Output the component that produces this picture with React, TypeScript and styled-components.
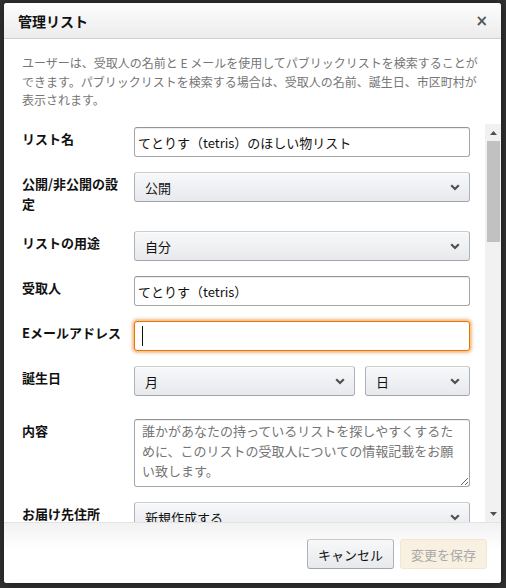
import React from 'react';
import styled, { createGlobalStyle, css } from 'styled-components';

const GlobalStyle = createGlobalStyle`
  html, body {
    margin: 0;
    padding: 0;
  }
  body {
    background: #323232;
    font-family: "Noto Sans CJK JP", "Noto Sans", sans-serif;
    color: #111;
  }
`;

const Backdrop = styled.div`
  width: 506px;
  height: 588px;
  box-sizing: border-box;
  padding: 3px 5px 5px 4px;
  background: #323232;
`;

const Modal = styled.div`
  display: flex;
  flex-direction: column;
  height: 100%;
  background: #fff;
  border-radius: 3px;
  overflow: hidden;
  box-shadow: 0 0 12px rgba(0, 0, 0, 0.5);
`;

const Header = styled.div`
  flex: none;
  height: 36px;
  box-sizing: border-box;
  display: flex;
  align-items: center;
  justify-content: space-between;
  padding: 0 13px 0 14px;
  background: linear-gradient(#fdfdfd, #ececec);
  border-bottom: 1px solid #cfcfcf;
`;

const Title = styled.h4`
  margin: 0;
  font-size: 14px;
  font-weight: 700;
  line-height: 20px;
`;

const Close = styled.button`
  border: 0;
  padding: 0;
  background: none;
  color: #555;
  font-family: "DejaVu Sans", sans-serif;
  font-size: 15px;
  font-weight: 700;
  line-height: 20px;
  cursor: pointer;
`;

const Intro = styled.p`
  flex: none;
  margin: 0;
  height: 85px;
  box-sizing: border-box;
  padding: 15px 8px 0 18px;
  font-size: 12px;
  line-height: 18.5px;
  color: #767676;
  white-space: nowrap;
`;

/* scrolling body: form on the left, a classic scroll rail on the right */
const Body = styled.div`
  flex: 1;
  min-height: 0;
  display: flex;
`;

const ScrollArea = styled.div`
  flex: 1;
  min-width: 0;
  overflow: hidden;
`;

const Rail = styled.div`
  flex: none;
  width: 16px;
  display: flex;
  flex-direction: column;
  background: #f1f1f1;
`;

const RailButton = styled.div`
  flex: none;
  height: 17px;
  display: flex;
  align-items: center;
  justify-content: center;
`;

const Thumb = styled.div`
  flex: none;
  height: 101px;
  margin: 0 1px 0 2px;
  background: #c1c1c1;
`;

const Track = styled.div`
  flex: 1;
`;

const Form = styled.form`
  padding: 3px 15px 0 18px;
`;

const Row = styled.div`
  display: grid;
  grid-template-columns: 112px 1fr;
  margin-bottom: 15px;
`;

const Label = styled.label`
  padding: 2px 4px 2px 0;
  font-size: 13px;
  font-weight: 700;
  line-height: 20px;
`;

const fieldBorder = css`
  box-sizing: border-box;
  width: 100%;
  border: 1px solid #a6a6a6;
  border-top-color: #949494;
  border-radius: 3px;
  font-family: inherit;
  font-size: 13px;
  color: #111;
  outline: none;
`;

const TextInput = styled.input<{ $focused?: boolean }>`
  ${fieldBorder};
  height: 30px;
  padding: 0 3px;
  box-shadow: inset 0 1px 0 rgba(0, 0, 0, 0.07);
  ${(p) =>
    p.$focused &&
    css`
      border-color: #e77600;
      box-shadow: 0 0 3px 2px rgba(228, 121, 17, 0.5);
    `}
`;

const FocusWrap = styled.div`
  position: relative;
`;

const Caret = styled.span`
  position: absolute;
  left: 8px;
  top: 5px;
  width: 1px;
  height: 20px;
  background: #111;
`;

const TextArea = styled.textarea`
  ${fieldBorder};
  display: block;
  height: 68px;
  padding: 1px 7px;
  line-height: 20px;
  resize: vertical;
  box-shadow: inset 0 1px 0 rgba(0, 0, 0, 0.07);

  &::placeholder {
    color: #757575;
  }
`;

const SelectWrap = styled.div`
  position: relative;
`;

const Select = styled.select`
  box-sizing: border-box;
  width: 100%;
  height: 30px;
  padding: 0 30px 0 10px;
  appearance: none;
  border: 1px solid #adb1b8;
  border-color: #cdcdcd #adb1b8 #a2a6ac;
  border-radius: 3px;
  background: linear-gradient(#f7f8fa, #e7e9ec);
  box-shadow: inset 0 1px 0 rgba(255, 255, 255, 0.6);
  font-family: inherit;
  font-size: 13px;
  color: #111;
  outline: none;
`;

const Chevron = styled.svg`
  position: absolute;
  right: 10px;
  top: 12px;
  pointer-events: none;
`;

const DateGroup = styled.div`
  display: grid;
  grid-template-columns: 1fr 105px;
  gap: 10px;
  padding-bottom: 8px;
`;

const Footer = styled.div`
  flex: none;
  height: 61px;
  box-sizing: border-box;
  display: flex;
  align-items: center;
  justify-content: flex-end;
  gap: 6px;
  padding: 2px 14px 0 0;
  border-top: 1px solid #e3e3e3;
  background: linear-gradient(#f2f2f2, #fff 45%);
`;

const Button = styled.button<{ $primary?: boolean }>`
  width: 87px;
  height: 30px;
  border-radius: 3px;
  font-family: inherit;
  font-size: 13px;
  border: 1px solid #adb1b8;
  border-color: #c9cbcf #adb1b8 #a2a6ac;
  background: linear-gradient(#f7f8fa, #e7e9ec);
  color: #111;
  ${(p) =>
    p.$primary &&
    css`
      border-color: #f1e6cf;
      background: #f8f0e0;
      color: #a9a9a9;
    `}
`;

const Dropdown: React.FC<{ value: string }> = ({ value }) => (
  <SelectWrap>
    <Select defaultValue={value}>
      <option>{value}</option>
    </Select>
    <Chevron width="10" height="7" viewBox="0 0 10 7">
      <path d="M1.2 1.2L5 5l3.8-3.8" fill="none" stroke="#505050" strokeWidth="2.2" />
    </Chevron>
  </SelectWrap>
);

const Arrow: React.FC<{ down?: boolean }> = ({ down }) => (
  <svg width="7" height="4" viewBox="0 0 7 4">
    <path d={down ? 'M0 0h7L3.5 4z' : 'M0 4h7L3.5 0z'} fill="#505050" />
  </svg>
);

export default function App() {
  return (
    <>
      <GlobalStyle />
      <Backdrop>
        <Modal>
          <Header>
            <Title>管理リスト</Title>
            <Close type="button">×</Close>
          </Header>

          <Intro>
            ユーザーは、受取人の名前と E メールを使用してパブリックリストを検索することが
            <br />
            できます。パブリックリストを検索する場合は、受取人の名前、誕生日、市区町村が
            <br />
            表示されます。
          </Intro>

          <Body>
            <ScrollArea>
              <Form>
                <Row>
                  <Label>リスト名</Label>
                  <TextInput defaultValue="てとりす（tetris）のほしい物リスト" />
                </Row>

                <Row>
                  <Label>公開/非公開の設定</Label>
                  <Dropdown value="公開" />
                </Row>

                <Row>
                  <Label>リストの用途</Label>
                  <Dropdown value="自分" />
                </Row>

                <Row>
                  <Label>受取人</Label>
                  <TextInput defaultValue="てとりす（tetris）" />
                </Row>

                <Row>
                  <Label>Eメールアドレス</Label>
                  <FocusWrap>
                    <TextInput $focused type="email" />
                    <Caret />
                  </FocusWrap>
                </Row>

                <Row>
                  <Label>誕生日</Label>
                  <DateGroup>
                    <Dropdown value="月" />
                    <Dropdown value="日" />
                  </DateGroup>
                </Row>

                <Row>
                  <Label>内容</Label>
                  <TextArea placeholder="誰かがあなたの持っているリストを探しやすくするために、このリストの受取人についての情報記載をお願い致します。" />
                </Row>

                <Row>
                  <Label>お届け先住所</Label>
                  <Dropdown value="新規作成する" />
                </Row>
              </Form>
            </ScrollArea>

            <Rail>
              <RailButton>
                <Arrow />
              </RailButton>
              <Thumb />
              <Track />
              <RailButton>
                <Arrow down />
              </RailButton>
            </Rail>
          </Body>

          <Footer>
            <Button type="button">キャンセル</Button>
            <Button type="button" $primary disabled>
              変更を保存
            </Button>
          </Footer>
        </Modal>
      </Backdrop>
    </>
  );
}
